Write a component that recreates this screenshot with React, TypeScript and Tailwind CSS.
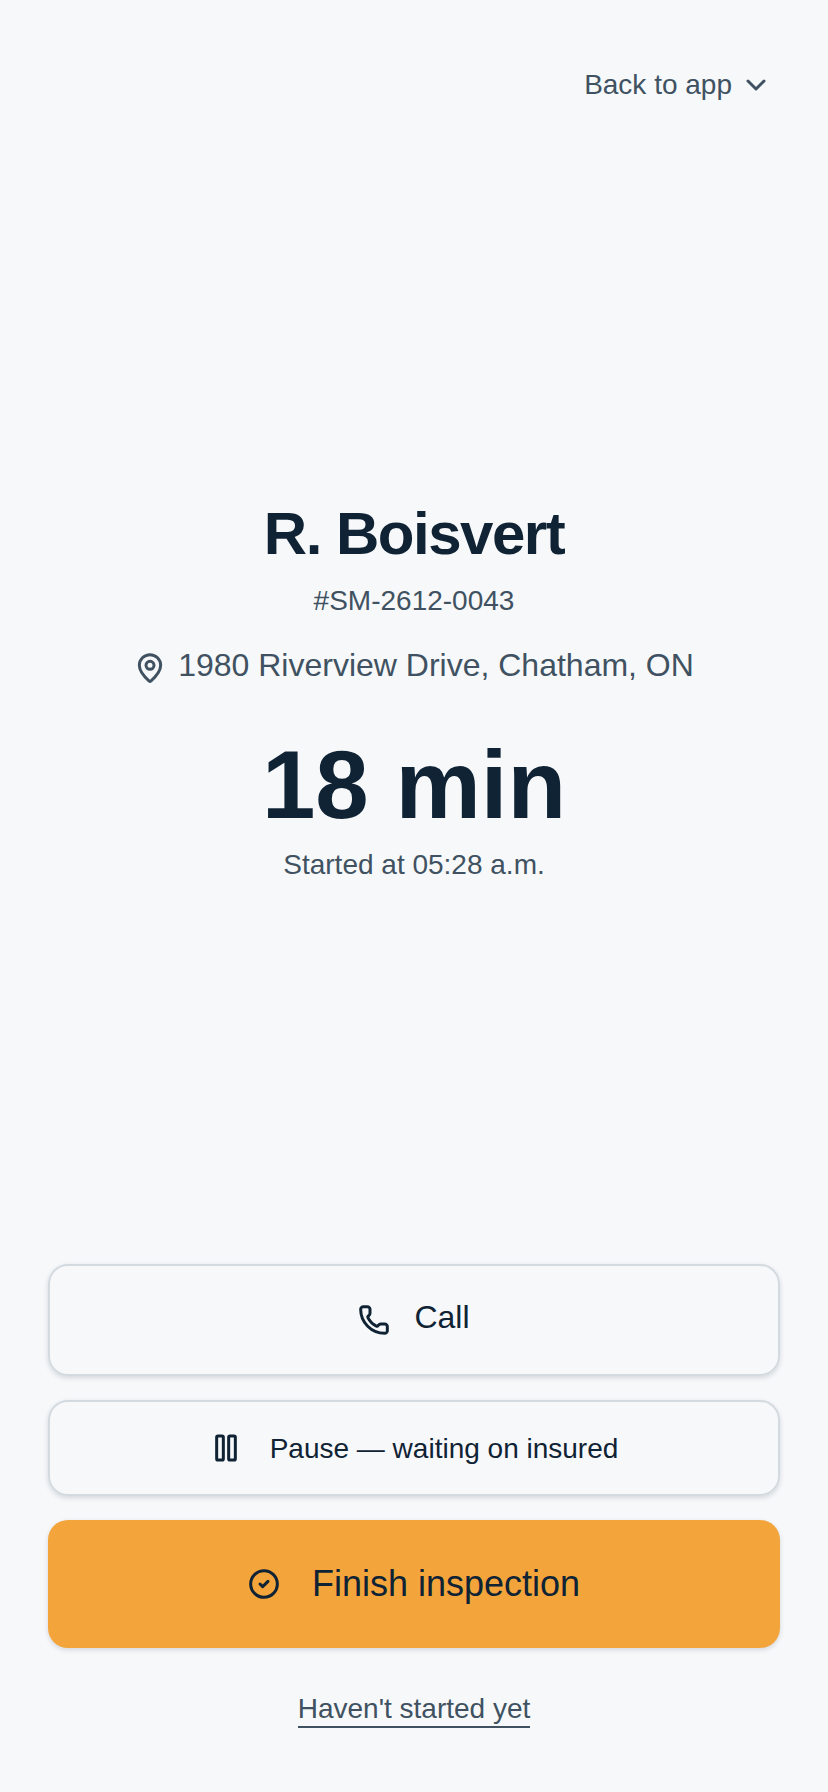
import { ChevronDown, MapPin, Phone, Pause, CircleCheck } from "lucide-react";

export default function App() {
  return (
    <div className="min-h-[1792px] bg-[#f7f8fa] flex flex-col px-12 font-['Liberation_Sans',Arial,sans-serif] text-[#0f2334]">
      <header className="flex justify-end pt-[65px] pr-[8px]">
        <button className="flex items-center gap-2 h-[40px] text-[28px] text-[#405261]">
          Back to app
          <ChevronDown size={32} strokeWidth={2.25} />
        </button>
      </header>
      <main className="flex flex-col items-center mt-[393px]">
        <h1 className="text-[60px] leading-[72px] font-bold tracking-[-1.5px]">R. Boisvert</h1>
        <p className="mt-[11px] text-[28px] leading-[40px] text-[#405261]">#SM-2612-0043</p>
        <p className="mt-[20px] flex items-center gap-3 text-[32px] leading-[48px] text-[#405261]">
          <MapPin size={32} strokeWidth={2.25} className="mt-[6px]" />
          1980 Riverview Drive, Chatham, ON
        </p>
        <p className="mt-[40px] text-[96px] leading-[112px] font-bold">18 min</p>
        <p className="mt-[4px] text-[28px] leading-[40px] text-[#405261]">Started at 05:28 a.m.</p>
      </main>
      <footer className="mt-auto flex flex-col gap-6 pb-[64px]">
        <button className="h-[112px] rounded-[20px] border-2 border-[#d3dbe1] shadow-[0_2px_5px_rgba(15,36,55,0.15)] flex items-center justify-center gap-6 text-[32px]">
          <Phone size={32} strokeWidth={2.25} />
          <span className="mb-[6px]">Call</span>
        </button>
        <button className="h-[96px] rounded-[20px] border-2 border-[#d3dbe1] shadow-[0_2px_5px_rgba(15,36,55,0.15)] flex items-center justify-center gap-7 text-[28px]">
          <Pause size={32} strokeWidth={2.25} />
          <span className="mt-[2px]">Pause — waiting on insured</span>
        </button>
        <button className="h-[128px] rounded-[20px] bg-[#f3a53c] shadow-[0_2px_5px_rgba(15,36,55,0.15)] flex items-center justify-center gap-8 text-[36px]">
          <CircleCheck size={32} strokeWidth={2.25} />
          Finish inspection
        </button>
        <a className="mt-[20px] self-center text-[28px] leading-[34px] text-[#405261] border-b-2 border-[#405261]">Haven't started yet</a>
      </footer>
    </div>
  );
}
